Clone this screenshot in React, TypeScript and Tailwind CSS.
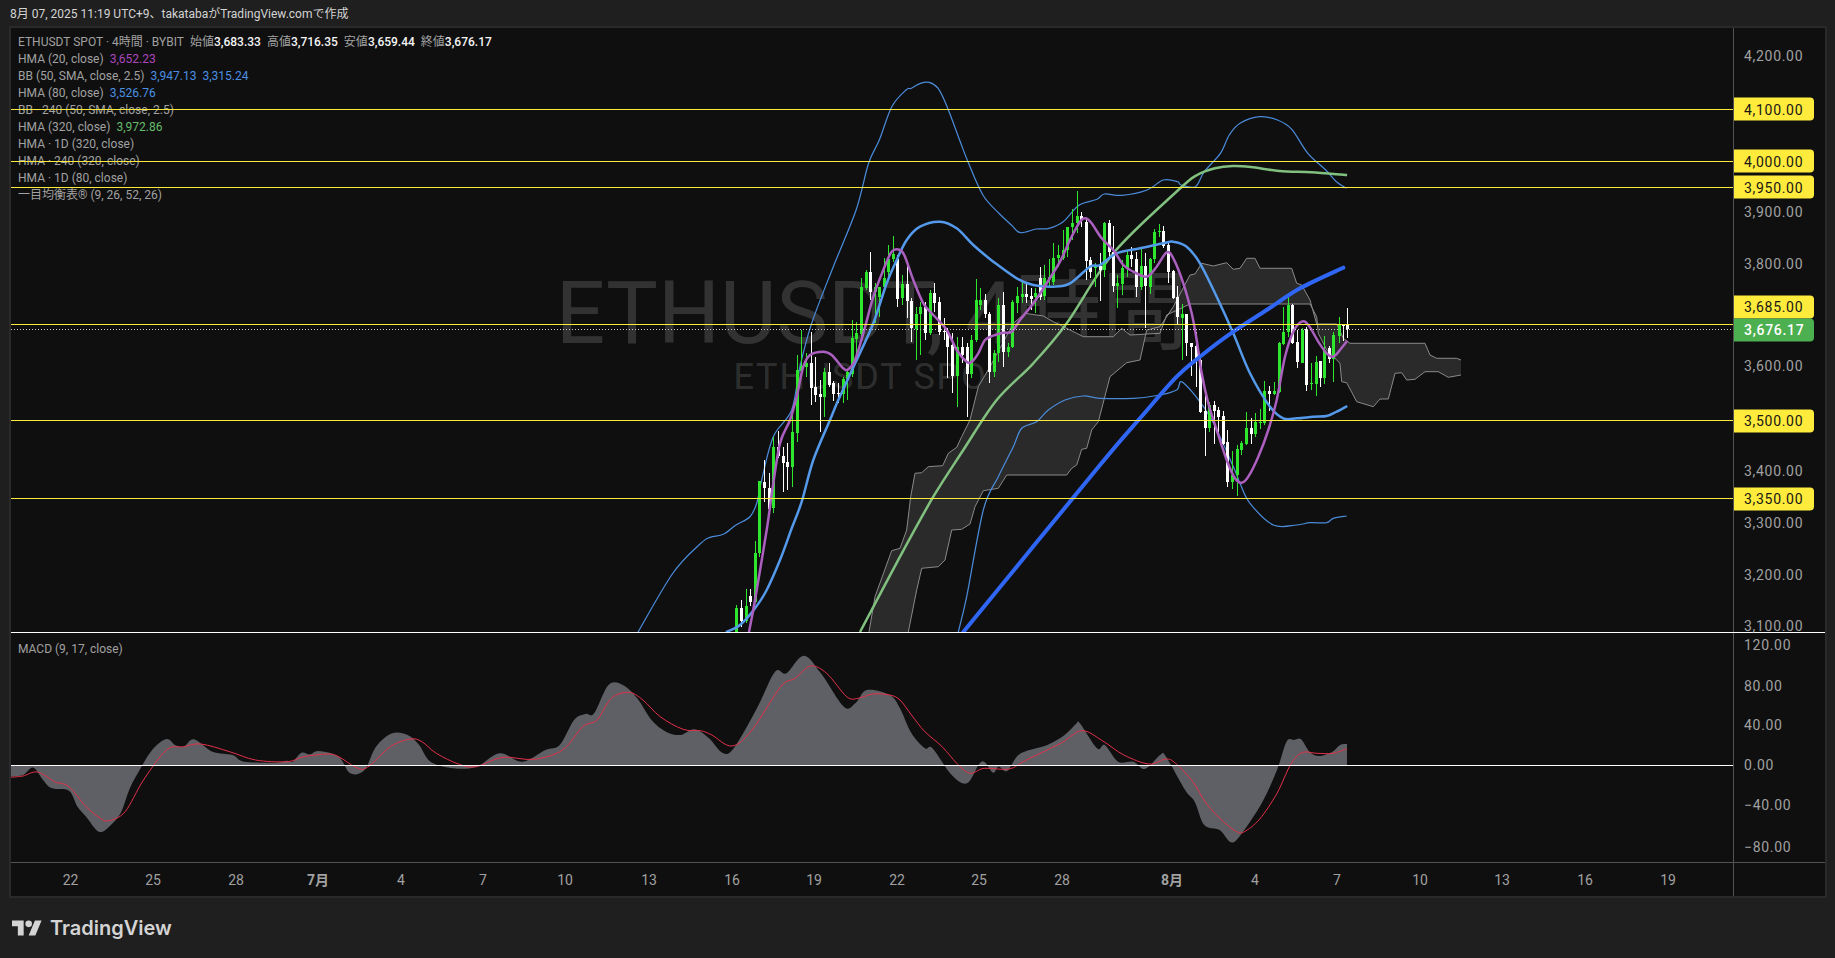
type Pt = number[];

const font = { fontFamily: 'Roboto, "Noto Sans CJK JP", sans-serif' };

// the numbers below were read off zoomed crops, so each group has its own origin
const grid = (ox: number, oy: number, sx = 3, sy = 3) => (pts: Pt[]) =>
  pts.map(([x, y]) => [ox + x / sx, oy + y / sy]);
const a5 = grid(700, 190);
const a6 = grid(1100, 200);
const a7 = grid(700, 400);
const a10 = grid(840, 70, 2.8);
const m8 = grid(0, 640, 1.742);
const m9 = grid(900, 640, 2.613);

const smooth = (p: Pt[]) => {
  let d = `M${p[0][0].toFixed(1)} ${p[0][1].toFixed(1)}`;
  for (let i = 0; i < p.length - 1; i++) {
    const a = p[i - 1] || p[i];
    const b = p[i];
    const c = p[i + 1];
    const e = p[i + 2] || c;
    const c1 = [b[0] + (c[0] - a[0]) / 6, b[1] + (c[1] - a[1]) / 6];
    const c2 = [c[0] - (e[0] - b[0]) / 6, c[1] - (e[1] - b[1]) / 6];
    d += `C${c1[0].toFixed(1)} ${c1[1].toFixed(1)} ${c2[0].toFixed(1)} ${c2[1].toFixed(1)} ${c[0].toFixed(1)} ${c[1].toFixed(1)}`;
  }
  return d;
};
const straight = (p: Pt[]) => p.map((q, i) => `${i ? "L" : "M"}${q[0].toFixed(1)} ${q[1].toFixed(1)}`).join("");

// [x, up, wickTop, bodyTop, bodyBottom, wickBottom]
const candlesA: Pt[] = [
  [109, 1, 1245, 1255, 1326, 1330], [124, 0, 1230, 1255, 1292, 1310], [138, 1, 1198, 1247, 1292, 1300],
  [151, 0, 1198, 1218, 1236, 1248], [166, 1, 1054, 1090, 1235, 1240], [178, 1, 874, 874, 1090, 1102],
  [192, 0, 810, 875, 893, 935], [206, 0, 850, 893, 958, 965], [220, 1, 740, 772, 955, 968],
  [235, 0, 724, 772, 797, 805], [248, 0, 772, 797, 820, 905], [262, 0, 760, 817, 830, 900],
  [275, 1, 665, 727, 830, 890], [290, 1, 495, 541, 728, 755], [304, 1, 420, 528, 543, 560],
  [317, 1, 490, 519, 530, 560], [332, 0, 425, 519, 593, 645], [344, 0, 500, 592, 614, 635],
  [359, 0, 570, 612, 620, 725], [373, 1, 535, 546, 620, 680], [386, 0, 520, 546, 584, 590],
  [400, 0, 572, 580, 612, 632], [414, 0, 578, 608, 610, 640], [428, 1, 560, 568, 612, 640],
  [441, 1, 540, 546, 568, 630], [455, 1, 390, 445, 552, 560], [469, 1, 395, 430, 446, 490],
  [482, 1, 265, 290, 432, 440], [497, 1, 240, 247, 294, 300], [510, 0, 186, 247, 305, 330],
  [524, 1, 280, 292, 306, 400], [538, 1, 290, 292, 320, 380], [551, 1, 205, 263, 292, 300],
  [565, 1, 165, 207, 247, 260], [578, 1, 137, 192, 207, 215], [592, 0, 195, 207, 327, 350],
  [606, 1, 255, 283, 325, 345], [620, 0, 225, 283, 332, 385], [634, 0, 325, 332, 415, 455],
  [647, 1, 350, 372, 418, 510], [661, 1, 335, 350, 372, 495], [674, 0, 335, 350, 430, 450],
  [689, 1, 300, 308, 430, 435], [703, 0, 280, 310, 338, 365], [717, 0, 320, 337, 425, 435],
  [731, 0, 385, 424, 426, 450], [742, 0, 415, 424, 470, 565], [757, 0, 430, 466, 558, 608],
  [772, 1, 440, 472, 558, 650], [786, 0, 440, 472, 495, 520], [800, 0, 460, 472, 552, 680],
  [813, 1, 435, 450, 552, 565], [827, 1, 268, 330, 450, 455], [841, 1, 295, 330, 345, 360],
  [854, 0, 312, 330, 372, 385], [868, 0, 365, 372, 545, 578], [882, 1, 480, 488, 545, 560],
  [895, 1, 325, 345, 488, 515], [910, 0, 305, 345, 485, 532], [923, 1, 460, 472, 485, 500],
  [937, 1, 330, 337, 472, 475], [950, 1, 290, 318, 340, 370], [965, 1, 270, 312, 320, 340],
  [978, 0, 280, 312, 322, 340], [992, 0, 295, 318, 328, 360], [1006, 1, 295, 310, 320, 370],
  [1019, 0, 232, 265, 320, 330], [1033, 1, 225, 265, 318, 330], [1046, 1, 208, 262, 268, 290],
  [1060, 1, 160, 205, 275, 285], [1074, 1, 165, 195, 205, 230], [1088, 1, 120, 180, 205, 210],
  [1102, 1, 110, 112, 180, 200], [1116, 1, 58, 100, 112, 150], [1130, 1, 3, 78, 100, 130],
  [1144, 0, 65, 78, 90, 110], [1157, 0, 85, 95, 212, 270], [1171, 0, 200, 210, 245, 265],
  [1185, 1, 220, 225, 235, 290], [1199, 0, 190, 227, 240, 333], [1211, 1, 95, 100, 240, 260],
];
const candlesB: Pt[] = [
  [26, 0, 60, 70, 157, 170], [40, 0, 78, 157, 258, 275], [52, 1, 225, 250, 258, 325],
  [67, 1, 180, 205, 252, 285], [80, 1, 150, 165, 205, 230], [94, 0, 142, 165, 178, 200],
  [108, 0, 155, 178, 262, 290], [122, 1, 145, 198, 260, 270], [136, 0, 160, 198, 258, 385],
  [149, 1, 175, 178, 262, 282], [163, 1, 88, 96, 178, 190], [177, 1, 72, 92, 95, 110],
  [190, 0, 78, 92, 138, 145], [205, 0, 125, 135, 215, 250], [218, 0, 210, 213, 295, 298],
  [232, 0, 258, 290, 352, 372], [245, 1, 312, 342, 355, 480], [259, 0, 342, 342, 428, 468],
  [274, 0, 428, 428, 440, 528], [287, 0, 395, 438, 484, 560], [300, 0, 465, 480, 636, 640],
  [314, 0, 580, 632, 684, 768], [328, 1, 605, 614, 684, 695], [342, 0, 603, 616, 632, 732],
  [355, 0, 620, 630, 652, 700], [370, 0, 632, 648, 732, 735], [382, 0, 690, 725, 846, 860],
  [397, 1, 752, 825, 846, 868], [412, 1, 735, 748, 825, 888], [424, 1, 722, 730, 750, 765],
  [439, 1, 636, 684, 732, 735], [452, 0, 655, 684, 702, 732], [466, 1, 640, 666, 702, 712],
  [480, 1, 628, 665, 668, 688], [493, 1, 544, 574, 668, 675], [508, 0, 558, 574, 582, 632],
  [521, 1, 545, 574, 582, 585], [536, 1, 425, 430, 576, 580], [548, 1, 322, 397, 432, 435],
  [563, 1, 292, 315, 397, 410], [577, 0, 312, 315, 428, 432], [590, 0, 390, 426, 486, 505],
  [605, 1, 385, 390, 488, 490], [617, 0, 380, 388, 555, 572], [632, 1, 488, 548, 552, 570],
  [647, 1, 468, 486, 552, 588], [659, 0, 482, 484, 534, 562], [673, 1, 408, 450, 534, 552],
  [686, 0, 437, 445, 476, 488], [700, 1, 396, 405, 476, 545], [716, 1, 352, 375, 408, 430],
  [728, 0, 372, 375, 378, 422], [742, 0, 325, 375, 388, 415],
];
const candles = [
  ...candlesA.map(([x, up, a, b, c, d]) => ({ x: 700 + x / 3, up, y: [a, b, c, d].map((v) => 190 + v / 3) })),
  ...candlesB.map(([x, up, a, b, c, d]) => ({ x: 1100 + x / 3, up, y: [a, b, c, d].map((v) => 200 + v / 3) })),
];

const hma20 = [
  ...a7([[147, 696], [165, 600]]),
  ...a5([[200, 1020], [217, 900], [240, 760], [270, 690], [290, 620], [310, 530], [330, 495], [370, 485], [395, 495], [430, 535], [445, 538], [465, 510], [490, 430], [520, 320], [550, 240], [575, 185], [600, 180], [615, 200], [640, 270], [670, 340], [700, 375], [740, 420], [770, 480], [800, 515], [815, 515], [835, 490], [855, 450], [880, 437], [910, 428], [935, 425], [960, 390], [1000, 340], [1040, 280], [1080, 215], [1110, 150], [1140, 95], [1157, 85], [1175, 100]]),
  ...a6([[5, 115], [40, 150], [70, 195], [100, 215], [140, 230], [170, 200], [200, 157], [220, 175], [250, 250], [275, 340], [290, 420], [305, 520], [325, 610], [350, 690], [380, 780], [405, 835], [425, 848], [445, 830], [475, 770], [505, 690], [530, 600], [555, 470], [580, 395], [605, 365], [625, 375], [655, 425], [680, 460], [700, 470], [720, 450], [742, 422]]),
];
const hma80 = [
  ...a7([[78, 696], [120, 675], [165, 625], [200, 570], [240, 480], [275, 385], [305, 305], [340, 180], [390, 60], [415, 0]]),
  ...a5([[470, 510], [520, 400], [560, 280], [590, 210], [620, 150], [660, 110], [720, 95], [770, 115], [820, 165], [880, 215], [950, 265], [1000, 285], [1060, 290], [1110, 280], [1170, 230]]),
  ...a6([[0, 195], [50, 160], [120, 145], [190, 130], [220, 125], [260, 140], [300, 190], [350, 290], [400, 400], [450, 520], [510, 620], [550, 655], [590, 655], [640, 650], [680, 648], [710, 635], [742, 618]]),
];
const bbUpper = [
  [638, 632], [673, 573],
  ...a7([[0, 432], [30, 412], [70, 403], [108, 375], [150, 350], [170, 310], [185, 240], [220, 110], [275, 30]]),
  ...a5([[300, 530], [335, 400], [400, 230]]),
  ...a10([[45, 420], [80, 280], [110, 210], [145, 110], [185, 60], [200, 55], [225, 40], [250, 37], [275, 55], [300, 110], [335, 210], [360, 280], [400, 375], [445, 430], [480, 465], [505, 488], [550, 477], [585, 475], [625, 455], [670, 405], [720, 388], [740, 372], [790, 376], [860, 360], [905, 330], [945, 335], [955, 345], [995, 350], [1020, 305], [1065, 250], [1090, 195], [1120, 160], [1175, 140], [1225, 150], [1265, 178], [1310, 250], [1360, 300], [1390, 335], [1418, 355]]),
];
const bbLower = [
  ...a7([[775, 696], [800, 590], [850, 330], [895, 230], [940, 140], [965, 85], [1010, 65], [1045, 30], [1095, 0]]),
  ...a5([[1150, 618], [1200, 625], [1300, 625], [1380, 615], [1430, 600], [1450, 578]]),
  ...a6([[330, 650], [400, 800], [420, 850], [450, 910], [520, 975], [590, 975], [630, 968], [680, 968], [700, 955], [740, 948]]),
];
const hma320 = [
  ...a7([[480, 696], [600, 470], [700, 290], [790, 150], [890, 0]]),
  ...a5([[1000, 520], [1100, 400], [1240, 190], [1435, 0]]),
  ...a10([[1000, 315], [1050, 295], [1100, 288], [1150, 291], [1230, 303], [1320, 307], [1420, 315]]),
];
const hmaDay = a6([[0, 800], [120, 655], [230, 530], [300, 470], [400, 395], [500, 330], [600, 265], [730, 203]]);
const thick = [...a7([[790, 696], [1200, 195]]), ...hmaDay.slice(1)];

const spanA = [
  ...a7([[507, 696], [525, 590], [575, 452], [600, 445], [620, 390], [632, 290], [645, 220], [665, 218], [685, 200], [728, 197], [745, 160], [770, 142], [785, 110], [810, 60]]),
  ...a5([[835, 590], [870, 530], [940, 400], [975, 370], [1030, 378], [1060, 395], [1130, 430], [1150, 440], [1240, 440], [1265, 415], [1290, 435]]),
  ...a6([[180, 400], [200, 345], [270, 312], [630, 312], [650, 350], [655, 400], [680, 450], [720, 490], [725, 545], [740, 548], [770, 605], [820, 620], [840, 597], [865, 597], [885, 520], [905, 518], [920, 540], [945, 538], [975, 515], [1015, 515], [1045, 532], [1083, 525]]),
];
const spanB = [
  ...a7([[625, 696], [650, 570], [665, 505], [715, 500], [735, 480], [755, 390], [785, 388], [810, 372], [825, 320], [850, 272], [895, 265], [920, 225], [1100, 225], [1115, 205], [1130, 195], [1145, 148], [1160, 145], [1175, 90], [1195, 65]]),
  ...a5([[1230, 560], [1280, 518], [1320, 510], [1340, 420]]),
  ...a6([[180, 380], [220, 320], [270, 225], [285, 222], [305, 190], [340, 198], [380, 188], [400, 208], [420, 205], [440, 175], [465, 175], [480, 205], [575, 205], [590, 250], [605, 255], [630, 300], [650, 372], [710, 372], [730, 415], [750, 430], [975, 430], [990, 465], [1010, 475], [1070, 475], [1083, 480]]),
];

const macd = [
  ...m8([[18, 410], [40, 405], [58, 383], [75, 420], [90, 445], [120, 452], [135, 500], [150, 530], [172, 575], [190, 560], [210, 520], [225, 450], [240, 400], [265, 330], [290, 297], [305, 315], [320, 320], [338, 298], [370, 335], [405, 345], [425, 365], [480, 368], [500, 362], [510, 365], [525, 338], [540, 343], [555, 333], [590, 350], [610, 400], [635, 390], [655, 320], [683, 280], [710, 285], [730, 315], [750, 365], [790, 385], [830, 380], [870, 340], [910, 365], [950, 330], [975, 315], [1000, 240], [1020, 222], [1035, 220], [1060, 135], [1085, 135], [1110, 175], [1135, 240], [1160, 275], [1185, 285], [1210, 268], [1235, 295], [1260, 340], [1280, 320], [1320, 200], [1350, 95], [1370, 100], [1400, 47], [1430, 100], [1470, 200], [1490, 190], [1510, 150], [1550, 165]]),
  ...m9([[0, 205], [30, 280], [65, 325], [85, 325], [135, 405], [175, 430], [205, 375], [220, 365], [243, 398], [258, 380], [280, 393], [305, 350], [330, 333], [385, 315], [430, 285], [460, 252], [470, 250], [515, 325], [535, 315], [570, 365], [610, 365], [640, 387], [680, 345], [695, 350], [745, 450], [770, 485], [795, 555], [835, 570], [865, 607], [890, 585], [945, 490], [985, 390], [1010, 305], [1030, 300], [1048, 298], [1070, 335], [1095, 348], [1130, 335], [1150, 315], [1168, 312]]),
];
const signal = [
  ...m8([[18, 412], [40, 408], [65, 396], [95, 425], [120, 440], [150, 500], [175, 535], [190, 542], [218, 515], [250, 420], [290, 330], [320, 320], [350, 312], [400, 335], [445, 360], [500, 365], [530, 350], [570, 342], [590, 350], [620, 382], [640, 382], [680, 320], [715, 297], [735, 305], [760, 340], [800, 373], [830, 380], [875, 352], [930, 358], [980, 330], [1015, 260], [1040, 240], [1065, 175], [1095, 157], [1120, 180], [1150, 230], [1190, 268], [1220, 272], [1240, 285], [1275, 318], [1310, 270], [1360, 140], [1385, 115], [1412, 78], [1440, 100], [1475, 170], [1495, 175], [1520, 162], [1550, 165]]),
  ...m9([[0, 180], [30, 225], [65, 275], [110, 320], [155, 378], [185, 400], [220, 385], [285, 387], [330, 360], [420, 310], [475, 272], [530, 303], [585, 345], [650, 372], [695, 357], [720, 370], [765, 425], [800, 490], [845, 545], [880, 575], [900, 575], [940, 537], [985, 460], [1020, 375], [1050, 338], [1090, 340], [1130, 340], [1168, 326]]),
];

const levels = [109, 161, 187, 324, 420, 498];

const priceLabels = [
  { text: "4,200.00", y: 56 },
  { text: "3,900.00", y: 212 },
  { text: "3,800.00", y: 264 },
  { text: "3,600.00", y: 366 },
  { text: "3,400.00", y: 471 },
  { text: "3,300.00", y: 523 },
  { text: "3,200.00", y: 575 },
  { text: "3,100.00", y: 626 },
];
const priceTags = [
  { text: "4,100.00", y: 109 },
  { text: "4,000.00", y: 161 },
  { text: "3,950.00", y: 187 },
  { text: "3,685.00", y: 306.5 },
  { text: "3,500.00", y: 420.5 },
  { text: "3,350.00", y: 498.5 },
];
const macdLabels = [
  { text: "120.00", y: 645 },
  { text: "80.00", y: 686 },
  { text: "40.00", y: 725 },
  { text: "0.00", y: 765 },
  { text: "−40.00", y: 805 },
  { text: "−80.00", y: 847 },
];
const timeLabels = [
  { text: "22", x: 70.5 }, { text: "25", x: 153 }, { text: "28", x: 236 }, { text: "7月", x: 318, bold: true },
  { text: "4", x: 401 }, { text: "7", x: 483 }, { text: "10", x: 565 }, { text: "13", x: 649 }, { text: "16", x: 732 },
  { text: "19", x: 814 }, { text: "22", x: 897 }, { text: "25", x: 979 }, { text: "28", x: 1062 },
  { text: "8月", x: 1172, bold: true }, { text: "4", x: 1255 }, { text: "7", x: 1337 }, { text: "10", x: 1420 },
  { text: "13", x: 1502 }, { text: "16", x: 1585 }, { text: "19", x: 1668 },
];

const legend = [
  { name: "HMA (20, close)", values: [{ v: "3,652.23", c: "text-[#ab47bc]" }] },
  { name: "BB (50, SMA, close, 2.5)", values: [{ v: "3,947.13", c: "text-[#4a90e2]" }, { v: "3,315.24", c: "text-[#4a90e2]" }] },
  { name: "HMA (80, close)", values: [{ v: "3,526.76", c: "text-[#4a90e2]" }] },
  { name: "BB · 240 (50, SMA, close, 2.5)", values: [] },
  { name: "HMA (320, close)", values: [{ v: "3,972.86", c: "text-[#66bb6a]" }] },
  { name: "HMA · 1D (320, close)", values: [] },
  { name: "HMA · 240 (320, close)", values: [] },
  { name: "HMA · 1D (80, close)", values: [] },
  { name: "一目均衡表® (9, 26, 52, 26)", values: [] },
];

const ohlc = [
  ["始値", "3,683.33"],
  ["高値", "3,716.35"],
  ["安値", "3,659.44"],
  ["終値", "3,676.17"],
];

function MainChart() {
  return (
    <svg viewBox="11 28 1722 604" className="absolute inset-0 h-full w-full" fill="none">
      <path d={straight([...spanA, ...[...spanB].reverse()]) + "Z"} fill="#2a2a2a" fillRule="nonzero" />
      <path d={straight(spanA)} stroke="#8a8a8a" strokeWidth="1" strokeLinejoin="round" />
      <path d={straight(spanB)} stroke="#8a8a8a" strokeWidth="1" strokeLinejoin="round" />
      <path d={smooth(bbUpper)} stroke="#4a8ad8" strokeWidth="1.25" />
      <path d={smooth(bbLower)} stroke="#4a8ad8" strokeWidth="1.25" />
      <path d={smooth(hma320)} stroke="#81c07f" strokeWidth="2.5" />
      {candles.map((c) => {
        const color = c.up ? "#2ee62e" : "#ffffff";
        const x = Math.round(c.x);
        return (
          <g key={c.x} fill={color} shapeRendering="crispEdges">
            <rect x={x} y={c.y[0]} width="1" height={c.y[3] - c.y[0]} />
            <rect x={x - 1} y={c.y[1]} width="3" height={Math.max(c.y[2] - c.y[1], 1)} />
          </g>
        );
      })}
      <path d={smooth(hma80)} stroke="#5499ea" strokeWidth="2.5" />
      <path d={smooth(hma20)} stroke="#ab5fbf" strokeWidth="2.5" />
      <path d={smooth(thick)} stroke="#2f66f5" strokeWidth="4" strokeLinecap="round" />
      {levels.map((y) => (
        <line key={y} x1="11" x2="1733" y1={y + 0.5} y2={y + 0.5} stroke="#ffeb3b" strokeWidth="1" />
      ))}
      <line x1="11" x2="1733" y1="329.5" y2="329.5" stroke="#d0d0d0" strokeWidth="1" strokeDasharray="1 2" />
    </svg>
  );
}

function MacdChart() {
  const area = `${smooth(macd)}L${macd[macd.length - 1][0]} 765.5L${macd[0][0]} 765.5Z`;
  return (
    <svg viewBox="11 633 1722 229" className="absolute inset-0 h-full w-full" fill="none">
      <path d={area} fill="#5f6065" />
      <path d={smooth(signal)} stroke="#e5304a" strokeWidth="1" />
      <line x1="11" x2="1733" y1="765.5" y2="765.5" stroke="#ffffff" strokeWidth="1" />
    </svg>
  );
}

export default function App() {
  return (
    <div className="flex h-screen flex-col overflow-hidden bg-[#1f1f1f]" style={font}>
      <div className="flex h-6.5 items-center pl-2.5 pt-0.5 text-xs text-neutral-300">
        8月 07, 2025 11:19 UTC+9、takatabaがTradingView.comで作成
      </div>

      <div className="ml-2.25 mr-2 flex flex-1 flex-col border-2 border-[#2a2a2a] bg-[#0f0f0f]">
        {/* price pane */}
        <div className="flex flex-1 border-b border-white">
          <div className="relative flex-1 overflow-hidden">
            <div className="absolute inset-0 flex flex-col items-center justify-center pt-1 text-white/15">
              <p className="text-[87px] leading-none">ETHUSDT, 4時間</p>
              <p className="mt-0.5 text-4xl leading-none tracking-wider">ETHUSDT SPOT</p>
            </div>
            <div className="absolute left-1.75 top-1.5 text-xs leading-4.25 text-neutral-400">
              <div className="flex gap-1.5">
                <span>ETHUSDT SPOT · 4時間 · BYBIT</span>
                {ohlc.map(([k, v]) => (
                  <span key={k}>
                    {k}
                    <span className="font-medium text-neutral-100">{v}</span>
                  </span>
                ))}
              </div>
              {legend.map((l) => (
                <div key={l.name} className="flex gap-1.5">
                  <span>{l.name}</span>
                  {l.values.map((v) => (
                    <span key={v.v} className={v.c}>{v.v}</span>
                  ))}
                </div>
              ))}
            </div>
            <MainChart />
          </div>
          <div className="relative w-23 border-l border-neutral-600 text-sm tracking-wider text-neutral-400">
            {priceLabels.map((p) => (
              <span key={p.text} className="absolute left-2.5 -translate-y-1/2" style={{ top: p.y - 28 }}>
                {p.text}
              </span>
            ))}
            {priceTags.map((p) => (
              <span
                key={p.text}
                className="absolute left-0 flex h-5.75 w-20 -translate-y-1/2 items-center rounded-r-sm bg-[#ffeb3b] pl-2.5 text-neutral-900"
                style={{ top: p.y - 28 }}
              >
                {p.text}
              </span>
            ))}
            <span
              className="absolute left-0 flex h-5.75 w-20 -translate-y-1/2 items-center rounded-r-sm bg-[#4caf50] pl-2.5 font-medium text-white"
              style={{ top: 329.5 - 28 }}
            >
              3,676.17
            </span>
          </div>
        </div>

        {/* macd pane */}
        <div className="flex h-57.25">
          <div className="relative flex-1 overflow-hidden">
            <span className="absolute left-1.75 top-2 text-xs leading-4.25 text-neutral-400">MACD (9, 17, close)</span>
            <MacdChart />
          </div>
          <div className="relative w-23 border-l border-neutral-600 text-sm tracking-wider text-neutral-400">
            {macdLabels.map((p) => (
              <span key={p.text} className="absolute left-2.5 -translate-y-1/2" style={{ top: p.y - 633 }}>
                {p.text}
              </span>
            ))}
          </div>
        </div>

        {/* time axis */}
        <div className="flex h-8.5 border-t border-neutral-600 text-sm text-neutral-400">
          <div className="relative flex-1">
            {timeLabels.map((t) => (
              <span
                key={t.x}
                className={`absolute top-1/2 -translate-x-1/2 -translate-y-1/2 ${t.bold ? "font-bold" : ""}`}
                style={{ left: t.x - 11 }}
              >
                {t.text}
              </span>
            ))}
          </div>
          <div className="w-23 border-l border-neutral-600" />
        </div>
      </div>

      <div className="flex h-15 items-center gap-2 pl-3 text-neutral-300">
        <svg viewBox="0 4 36 18" className="h-4 w-7.5" fill="currentColor">
          <path d="M14 22H7V11H0V4h14v18zM28 22h-8l7.5-18h8L28 22z" />
          <circle cx="20" cy="8" r="4" />
        </svg>
        <span className="text-xl font-semibold" style={{ fontFamily: "Inter, sans-serif" }}>
          TradingView
        </span>
      </div>
    </div>
  );
}
